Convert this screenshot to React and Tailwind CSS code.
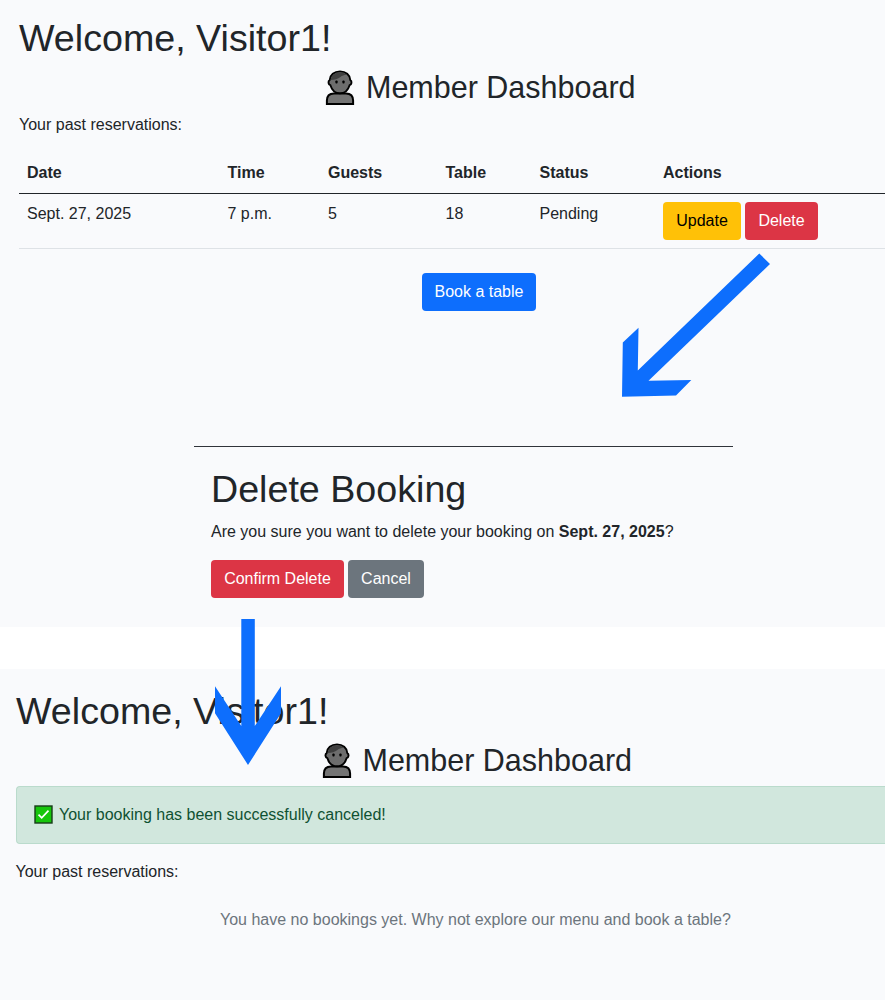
import React from "react";

function MemberIcon() {
  return (
    <svg className="h-[36px] w-[30px] shrink-0" viewBox="0 0 30 36">
      <path d="M1.9 34.1V30.5C1.9 26 4.5 23.4 9 23.4H21C25.5 23.4 28.1 26 28.1 30.5V34.1Z" fill="#747474" stroke="#000" strokeWidth="2" />
      <path d="M15 1.4C9.2 1.4 5 4.9 4.7 10C2.8 11.3 3.2 14.6 5.4 15.2C7 20.5 10.5 23.3 15 23.3S23 20.5 24.6 15.2C26.8 14.6 27.2 11.3 25.3 10C25 4.9 20.8 1.4 15 1.4Z" fill="#6d6d6d" stroke="#000" strokeWidth="1.9" />
      <path d="M5.7 10C6 5.6 9.6 2.4 15 2.4C17.8 2.4 20 3.2 21.7 4.7C18.8 4.9 17.2 5.5 15.4 7C13 9 9.5 10 5.7 10Z" fill="#404040" />
      <rect x="10.4" y="10.4" width="2.2" height="3.2" rx="0.8" fill="#000" />
      <rect x="17.4" y="10.4" width="2.2" height="3.2" rx="0.8" fill="#000" />
    </svg>
  );
}

function Welcome() {
  return <h1 className="text-[37.65px] leading-[46px]">Welcome, Visitor1!</h1>;
}

function DashboardTitle() {
  return (
    <h2 className="flex h-[38px] items-center gap-[11px] text-[30.5px] leading-[36px]">
      <MemberIcon />
      <span className="mb-[2px] whitespace-nowrap">Member Dashboard</span>
    </h2>
  );
}

function Button({ className, children }) {
  return (
    <button className={`flex h-[38px] items-center justify-center rounded-[4px] whitespace-nowrap ${className}`}>
      {children}
    </button>
  );
}

const columns = "grid grid-cols-[200.5px_100.5px_117.5px_94px_123.5px_1fr] pl-2";

export default function App() {
  return (
    <div className="relative h-[1000px] w-[885px] overflow-hidden bg-white font-['Liberation_Sans',Arial,sans-serif] text-[16px] leading-6 text-[#212529]">
      <section className="h-[627px] bg-[#f9fafc] pt-[15px] pl-[19px]">
        <Welcome />
        <div className="mt-2 pl-[306px]">
          <DashboardTitle />
        </div>
        <p className="mt-[6px]">Your past reservations:</p>
        <div className="mt-[14px]">
          <div className={`${columns} h-[43px] border-b border-[#212529] pt-[10px] font-bold`}>
            <span>Date</span>
            <span>Time</span>
            <span>Guests</span>
            <span>Table</span>
            <span>Status</span>
            <span>Actions</span>
          </div>
          <div className={`${columns} h-[55px] border-b border-[#dee2e6] pt-2`}>
            <span>Sept. 27, 2025</span>
            <span>7 p.m.</span>
            <span>5</span>
            <span>18</span>
            <span>Pending</span>
            <div className="flex gap-1">
              <Button className="w-[78px] bg-[#ffc107] text-black">Update</Button>
              <Button className="w-[73px] bg-[#dc3545] text-white">Delete</Button>
            </div>
          </div>
        </div>
        <div className="mt-6 pl-[403px]">
          <Button className="w-[114px] bg-[#0d6efd] text-white">Book a table</Button>
        </div>
        <div className="mt-[135px] ml-[175px] w-[539px] border-t border-[#30343a] pt-[19px] pl-[17px]">
          <h1 className="text-[37.65px] leading-[46px]">Delete Booking</h1>
          <p className="mt-2 whitespace-nowrap">
            Are you sure you want to delete your booking on <b>Sept. 27, 2025</b>?
          </p>
          <div className="mt-4 flex gap-1">
            <Button className="w-[133px] bg-[#dc3545] text-white">Confirm Delete</Button>
            <Button className="w-[76px] bg-[#6c757d] text-white">Cancel</Button>
          </div>
        </div>
      </section>

      <section className="mt-[42px] h-[331px] bg-[#f9fafc] pt-[19px] pl-4">
        <Welcome />
        <div className="mt-2 pl-[305.5px]">
          <DashboardTitle />
        </div>
        <div className="mt-[6px] flex h-[58px] items-center gap-[6px] rounded-l-[4px] border border-r-0 border-[#badbcc] bg-[#d1e7dd] pl-[17px] text-[#0f5132]">
          <svg className="mb-[2px] h-[19px] w-[19px]" viewBox="0 0 19 19">
            <rect x="1" y="1" width="17" height="17" fill="#16c60c" stroke="#173d19" strokeWidth="1.4" />
            <path d="M4.5 9.7L7.7 12.9L14.5 5.7" fill="none" stroke="#fff" strokeWidth="1.7" />
          </svg>
          <span>Your booking has been successfully canceled!</span>
        </div>
        <p className="-ml-[0.5px] mt-4">Your past reservations:</p>
        <p className="mt-6 pl-[204px] text-[#6c757d]">You have no bookings yet. Why not explore our menu and book a table?</p>
      </section>

      <svg className="pointer-events-none absolute top-[253px] left-[621px] h-[145px] w-[150px]" viewBox="621 253 150 145">
        <path d="M759.3 253.5L770 264L648.5 380.8L691.3 380L676 395.5L622 396.8L622.8 342.5L638.5 327.8L637.8 370.5Z" fill="#0d6efd" />
      </svg>
      <svg className="pointer-events-none absolute top-[618px] left-[214px] h-[148px] w-[68px]" viewBox="214 618 68 148">
        <path d="M241.3 619H254.8V726L281 686.3V713.3L248 765L215 713.3V686.3L241.3 726Z" fill="#0d6efd" />
      </svg>
    </div>
  );
}
